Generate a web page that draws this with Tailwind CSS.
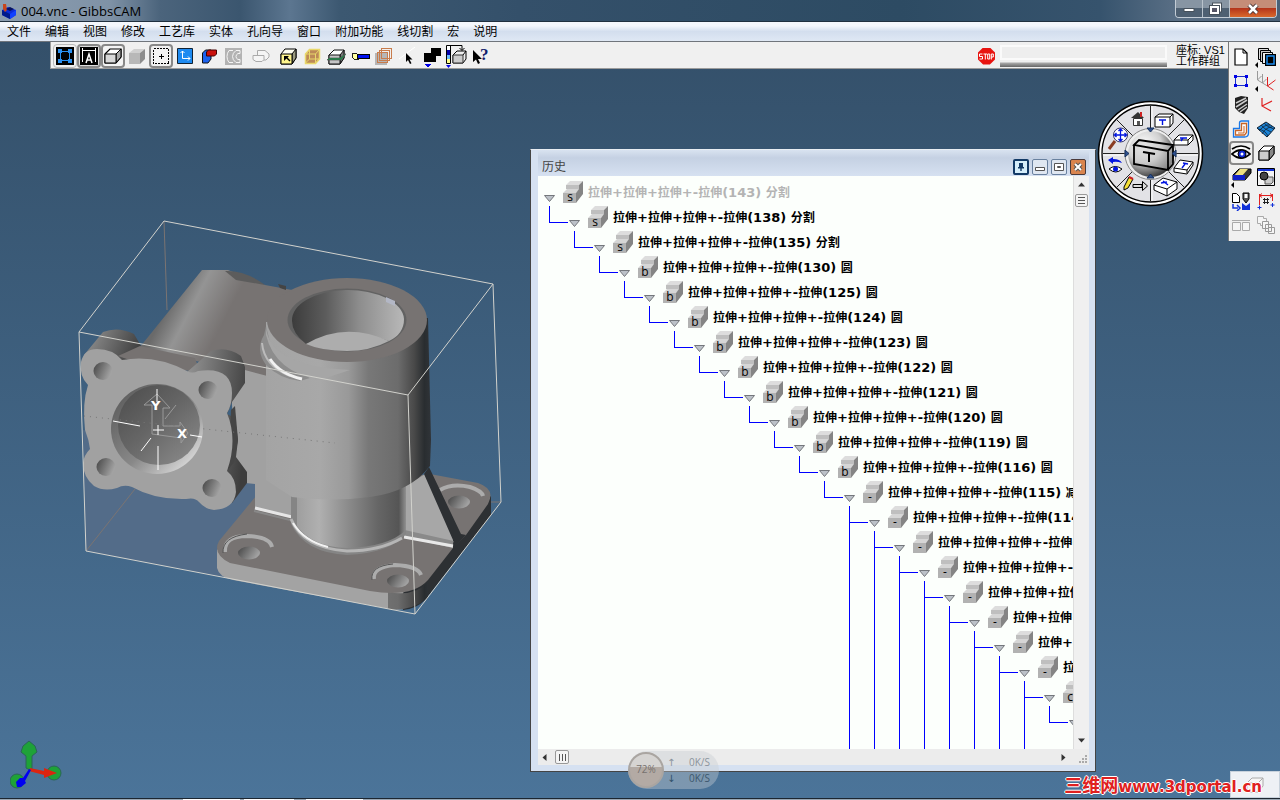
<!DOCTYPE html>
<html lang="zh-CN">
<head>
<meta charset="utf-8">
<title>004.vnc - GibbsCAM</title>
<script src="https://cdn.jsdelivr.net/npm/@tailwindcss/browser@4"></script>
</head>
<body class="flex h-screen flex-col overflow-hidden bg-[#34506a] font-['Open_Sans','Noto_Sans_CJK_SC',sans-serif] text-xs text-black">

<!-- Title bar -->
<header class="flex h-[22px] shrink-0 items-start justify-between border-b border-[#20303f] bg-[linear-gradient(90deg,#8b9db0_0,#7f92a6_110px,#4b647c_160px,#3b566f_240px,#5c7690_290px,#3c5871_340px,#34506a_520px,#2d4b63_900px,#36536d_1100px,#5b7086_1180px,#4a6077_100%)]">
  <div class="flex h-[21px] items-center gap-1 pl-px">
    <svg class="size-4" viewBox="0 0 16 16"><path d="M1 7l6-3 8 3v5l-6 4-8-4z" fill="#0a2ad8"/><path d="M1 7l8 4v5l-8-4z" fill="#001a8c"/><path d="M9 11l6-4v5l-6 4z" fill="#1040ff"/><path d="M2 1h3l1 6-2 2-2-3z" fill="#c8451c"/><path d="M5 6l4-2 4 2-4 2z" fill="#061260"/></svg>
    <h1 class="text-[13px] leading-5">004.vnc - GibbsCAM</h1>
  </div>
  <div class="mr-[3px] flex h-[18px] overflow-hidden rounded-b border border-t-0 border-[#c3ccd5]">
    <button aria-label="最小化" class="flex w-[27px] items-center justify-center border-r border-[#b9c3cc] bg-linear-to-b from-[#8795a3] from-45% to-[#4e6072] to-50%"><svg class="h-3 w-3" viewBox="0 0 12 12"><path d="M1 5.500h10v3H1z" fill="#fff" stroke="#46505a"/></svg></button>
    <button aria-label="还原" class="flex w-[27px] items-center justify-center border-r border-[#b9c3cc] bg-linear-to-b from-[#8795a3] from-45% to-[#4e6072] to-50%"><svg class="h-[14px] w-[14px]" viewBox="0 0 14 14"><path d="M5 2.500h6v6H5z" fill="none" stroke="#46505a" stroke-width="4"/><path d="M5 2.500h6v6H5z" fill="none" stroke="#fff" stroke-width="2"/><path d="M2 5h7v6H2z" fill="#556" stroke="#46505a" stroke-width="4"/><path d="M2 5h7v6H2z" fill="#556" stroke="#fff" stroke-width="2"/></svg></button>
    <button aria-label="关闭" class="flex w-[46px] items-center justify-center bg-linear-to-b from-[#c58d78] from-45% via-[#b5351b] via-50% to-[#d9682c]"><svg class="h-3 w-3" viewBox="0 0 12 12"><path d="M2 2l8 8M10 2l-8 8" stroke="#4a3535" stroke-width="4.500"/><path d="M2 2l8 8M10 2l-8 8" stroke="#fff" stroke-width="2.500"/></svg></button>
  </div>
</header>

<!-- Menu bar -->
<nav class="flex h-5 shrink-0 items-center gap-[14px] border-b border-[#70757c] bg-linear-to-b from-[#f4f7fc] from-20% via-[#d3deee] via-50% to-[#dfe8f4] pl-[7px] leading-4">
  <button>文件</button><button>编辑</button><button>视图</button><button>修改</button><button>工艺库</button><button>实体</button><button>孔向导</button><button>窗口</button><button>附加功能</button><button>线切割</button><button>宏</button><button>说明</button>
</nav>

<main class="relative flex-1 bg-linear-to-b from-[#34506a] to-[#4b7499]">

  <div class="flex items-start">
    <!-- Toolbar -->
    <div class="ml-[50px] flex h-[27px] flex-1 items-center border-b border-l border-[#9b9b9b] bg-[#f0f0f0] pt-[2px] pl-[2px]">
      <button aria-label="工作区" class="flex size-6 items-center justify-center rounded border border-[#bbb]"><svg class="size-[18px]" viewBox="0 0 18 18" shape-rendering="crispEdges"><path d="M0 0h18v18H0z"/><path d="M4.500 4.500h9v9h-9z" fill="none" stroke="#2a90f0"/><path d="M2 2h4v4H2zM12 2h4v4h-4zM2 12h4v4H2zM12 12h4v4h-4z" fill="#2a90f0"/></svg></button>
      <button aria-label="标注" class="flex size-6 items-center justify-center rounded border-2 border-[#888] bg-[#ddd]"><svg class="size-[18px] shrink-0" viewBox="0 0 18 18"><path d="M0 0h18v18H0z"/><path d="M2.500 15V3.500h13V15M2.500 1v4M15.500 1v4" fill="none" stroke="#fff"/><path d="M6 16l3-9 3 9M7 13h4" fill="none" stroke="#fff" stroke-width="1.500"/></svg></button>
      <button aria-label="实体" class="flex size-6 items-center justify-center rounded border-2 border-[#888] bg-[#f4f4f4]"><svg class="size-[18px] shrink-0" viewBox="0 0 18 18"><path d="M1 7l5-5h11v8l-5 6H1z" fill="#fff" stroke="#000" stroke-width="1.200"/><path d="M12 7l5-5v8l-5 6z" fill="#aaa" stroke="#000"/><path d="M1 7h11v9H1z" fill="#d8d8d8" stroke="#000"/></svg></button>
      <button aria-label="着色" class="flex size-6 items-center justify-center"><svg class="size-[18px]" viewBox="0 0 18 18"><path d="M1 6l5-4h11l-5 4z" fill="#d0d0d0"/><path d="M1 6h11v11H1z" fill="#b8b8b8"/><path d="M12 6l5-4v10l-5 5z" fill="#8d8d8d"/></svg></button>
      <button aria-label="选择" class="flex size-6 items-center justify-center rounded border-2 border-[#888]"><svg class="size-[18px] shrink-0" viewBox="0 0 18 18" shape-rendering="crispEdges"><path d="M1.500 1.500h15v15h-15z" fill="#f4f4f4" stroke="#000" stroke-dasharray="2 1"/><path d="M9.500 7v5M7 9.500h5" stroke="#000"/></svg></button>
      <button aria-label="坐标系" class="flex size-6 items-center justify-center"><svg class="size-[16px]" viewBox="0 0 16 16"><path d="M.5.500h15v15H.5z" fill="#1e8af0" stroke="#123"/><path d="M5.500 3v7.500H13M3.500 5l2-2 2 2M11 8.500l2 2-2 2" fill="none" stroke="#fff"/></svg></button>
      <button aria-label="切换" class="flex size-6 items-center justify-center"><svg class="size-[16px]" viewBox="0 0 16 16"><path d="M1.500 5l3-3H10v9l-3 4H1.500z" fill="#1c62ee" stroke="#111"/><path d="M5.500 4l2-2h8v4l-2 2H5.500z" fill="#c9100c" stroke="#400"/></svg></button>
      <button aria-label="轮廓" class="flex size-6 items-center justify-center"><svg class="size-[17px]" viewBox="0 0 17 17"><path d="M0 0h17v17H0z" fill="#b3b3b3"/><path d="M8 2.500H4Q2 5 2 8.500T4 14.500h4M15 2.500h-4Q7.500 5 7.500 8.500t3.500 6h4v-3h-2q-2-1-2-3t2-3h2z" fill="none" stroke="#f4f4f4"/></svg></button>
      <button aria-label="毛坯" class="ml-1 flex size-6 items-center justify-center"><svg class="h-[14px] w-[18px]" viewBox="0 0 18 14"><path d="M5.500 6V1.500H13l4 3.500v3l-3 3h-3" fill="#f5f5f5" stroke="#aaa"/><path d="M1 6.500h11v4l-2 2H4l-3-2z" fill="#f5f5f5" stroke="#aaa"/></svg></button>
      <button aria-label="选面" class="ml-[3px] flex size-6 items-center justify-center"><svg class="size-[17px]" viewBox="0 0 17 17"><path d="M1 6l4-5h11v9l-4 6H1z" fill="#fffef0" stroke="#000"/><path d="M12 6l4-5v9l-4 6z" fill="#9a9a80" stroke="#000"/><path d="M1 6h11v10H1z" fill="#fff58c" stroke="#000"/><path d="M4 8h5L7.500 9.500l3 3-1 1-3-3L4 13z"/></svg></button>
      <button aria-label="选边" class="flex size-6 items-center justify-center"><svg class="size-[17px]" viewBox="0 0 17 17"><path d="M1.500 6l4-4.500h10V11l-4 4.500h-10z" fill="#bd8a58" stroke="#e9d86a" stroke-width="1.500"/><path d="M1 6h10.500v9M11.500 6l4-4.500M5.500 2v9h10M5.500 11l-4 4" fill="none" stroke="#e9d86a"/></svg></button>
      <button aria-label="剖面" class="flex size-6 items-center justify-center"><svg class="size-[19px]" viewBox="0 0 19 19"><path d="M2 8l5-5h10v8l-4 6H2z" fill="#fff" stroke="#111"/><path d="M13 8l4-5v8l-4 6z" fill="#777" stroke="#111"/><path d="M2 8h11v9H2z" fill="#c5c5c5" stroke="#111"/><path d="M0 13l2-2h11l5-4h1l-5 6z" fill="#159045" stroke="#555" stroke-width=".7"/></svg></button>
      <button aria-label="刀具" class="flex size-6 items-center justify-center"><svg class="h-[9px] w-[19px]" viewBox="0 0 19 9" shape-rendering="crispEdges"><path d="M1 1h4l2 2v4H3L1 5z" fill="#ffffa0" stroke="#222"/><path d="M6.500 2.500h12v4h-12z" fill="#0010f0" stroke="#000"/></svg></button>
      <button aria-label="图层" class="flex size-6 items-center justify-center"><svg class="size-[18px]" viewBox="0 0 18 18" shape-rendering="crispEdges"><path d="M0 6h12v12H0z" fill="#b6b6b6"/><path d="M2.500 5.500h10v10h-10zM4.500 3.500h10v10h-10zM6.500 1.500h10v10h-10z" fill="none" stroke="#c87c4c"/></svg></button>
      <button aria-label="指针" class="flex size-6 items-center justify-center"><svg class="size-[18px]" viewBox="0 0 18 18"><path d="M0 12L16 0" stroke="#fff"/><path d="M7 6v9l2-2 2 4 1.500-.7-2-3.800h3z"/></svg></button>
      <button aria-label="形状" class="flex size-6 items-end justify-center"><svg class="h-[22px] w-[19px]" viewBox="0 0 19 22" shape-rendering="crispEdges"><path d="M1 7h12v9H1zM8 2h10v8h-5V7H8z"/><path d="M1 18h7l-3 4z" fill="#0000e8"/></svg></button>
      <button aria-label="定位" class="flex size-6 items-end justify-center"><svg class="h-[24px] w-[22px]" viewBox="0 0 22 24"><path d="M1.500 1.500h4v18h-4z" fill="#fff" stroke="#000"/><path d="M2 6h3v5H2z" fill="#00a"/><path d="M2 11h3v4H2z" fill="#6bf"/><path d="M2 15h3v4H2z" fill="#ff8"/><path d="M5 1.500h12V6M14.500 4l2.500 2.500L19.500 4" fill="none" stroke="#000"/><path d="M8 11l4-4h9v8l-3 4H8z" fill="#eee" stroke="#000"/><path d="M8 11h10v8H8z" fill="#ccc" stroke="#333"/><path d="M18 11l3-4" stroke="#000"/><path d="M1 21h5l-2.500 3z" fill="#0000e8"/></svg></button>
      <button aria-label="帮助" class="flex size-6 items-center justify-center"><svg class="h-[20px] w-[20px] shrink-0 overflow-visible" viewBox="0 0 20 20"><path d="M3 4v12l3-2.500 2 4.500 2-1-2-4h4z"/><text x="10" y="14" class="font-['Liberation_Serif'] text-[17px] font-bold" fill="#10206c">?</text></svg></button>

      <div class="ml-auto flex items-center">
        <button aria-label="停止" class="size-[17px] bg-[#e81410] [clip-path:polygon(30%_0,70%_0,100%_30%,100%_70%,70%_100%,30%_100%,0_70%,0_30%)]"><svg class="block size-[17px]" viewBox="0 0 17 17"><path d="M4.500 6h-3v2.500h3V11h-3M5.500 6h3.500M7.300 6v5.500M9.700 6h2v5h-2zM13.300 11.500V6h2v3h-2" fill="none" stroke="#fff"/></svg></button>
        <div class="ml-[5px] flex w-[167px] flex-col gap-[2px]" role="progressbar" aria-label="进度">
          <div class="h-[15px] border-2 border-[#fafafa] bg-[#eee]"></div>
          <div class="h-[5px] border-t border-[#ccc] bg-linear-to-b from-[#aaa] to-[#666]"></div>
        </div>
        <p class="ml-[9px] w-[52px] pr-px font-['Liberation_Sans','Noto_Sans_CJK_SC',sans-serif] text-[11px] leading-[11px] whitespace-nowrap">座标: VS1<br>工作群组</p>
      </div>
    </div>

    <!-- Tool palette -->
    <div class="grid w-[52px] shrink-0 grid-cols-2 border-l border-[#777] bg-[#f0f0f0] pt-[3px] pr-[2px] pb-1">
      <button aria-label="新建" class="flex h-6 items-center justify-center"><svg class="size-5" viewBox="0 0 20 20"><path d="M4 2h8l4 4v12H4z" fill="#fff" stroke="#000" stroke-width="1.200"/><path d="M12 2v4h4" fill="none" stroke="#000"/></svg></button>
      <button aria-label="图层组" class="flex h-6 items-center justify-center"><svg class="size-[22px]" viewBox="0 0 22 22"><path d="M3.500 2.500h10v11h-10z" fill="#ddd" stroke="#000"/><path d="M5.500 4.500h10v11h-10z" fill="#ccc" stroke="#000"/><path d="M7.500 6.500h10v11h-10z" fill="#eee" stroke="#000"/><path d="M10 8h11v12H10z"/><path d="M12 10h7v8h-7z" fill="none" stroke="#1a8cf0" stroke-width="1.500"/><path d="M3 16v6l-3-3z"/></svg></button>
      <button aria-label="几何" class="flex h-6 items-center justify-center"><svg class="size-5" viewBox="0 0 20 20" shape-rendering="crispEdges"><path d="M4.500 5.500h11v9h-11z" fill="none" stroke="#1a30c8"/><path d="M3 4h3v3H3zM14 4h3v3h-3zM3 13h3v3H3zM14 13h3v3h-3z" fill="#0000e8"/></svg></button>
      <button aria-label="坐标系组" class="flex h-6 items-center justify-center"><svg class="size-[22px]" viewBox="0 0 22 22"><path d="M2.500 1v9l5 3M2.500 10l4-4M7.500 4v9l5 3M7.500 13l4-4" fill="none" stroke="#999"/><path d="M12.500 7v9l6 4M12.500 16l8-6" fill="none" stroke="#e02020"/><path d="M3 16v6l-3-3z"/></svg></button>
      <button aria-label="铣刀" class="flex h-6 items-center justify-center"><svg class="size-5" viewBox="0 0 20 20"><path d="M4 3l6-2 7 1v11l-4 6-5-2-4-4z" fill="#222"/><path d="M5 8l10-5M5 12l11-7M7 15l9-6M9 17l7-5" stroke="#ccc" stroke-width="1.500"/></svg></button>
      <button aria-label="坐标系" class="flex h-6 items-center justify-center"><svg class="size-5" viewBox="0 0 20 20"><path d="M6 3v8l9 5M6 11l10-5" fill="none" stroke="#e02020" stroke-width="1.200"/></svg></button>
      <button aria-label="加工" class="flex h-6 items-center justify-center"><svg class="size-5" viewBox="0 0 20 20"><path d="M2.500 9.500h6V4q0-2 2-2h7v12q0 4-4 4h-11z" fill="none" stroke="#1a78e8" stroke-width="1.300"/><path d="M4.500 11.500h6v-7h5v9l-2 2.500h-9z" fill="#fff" stroke="#c86428" stroke-width="1.300"/><path d="M7 14h6V7" fill="none" stroke="#c86428"/></svg></button>
      <button aria-label="曲面" class="flex h-6 items-center justify-center"><svg class="size-5" viewBox="0 0 20 20"><path d="M1 9l9-6 9 6-8 9z" fill="#1a84d8" stroke="#123"/><path d="M3 12q6-7 11-6M6 15q4-7 10-7M5 6q3 4 10 7M2 10q7 1 10 7M8 4q3 4 10 6" fill="none" stroke="#123" stroke-width=".8"/></svg></button>
      <button aria-label="视图" class="flex h-6 items-center justify-center rounded border-2 border-[#888]"><svg class="size-5 shrink-0" viewBox="0 0 20 20"><path d="M1 6q9-6 18 0M1 11q9-8 18 0-9 8-18 0z" fill="#fff" stroke="#000" stroke-width="1.700"/><circle cx="11" cy="11" r="4" fill="#1028d8" stroke="#000"/><circle cx="11" cy="11" r="1.500" fill="#fff"/></svg></button>
      <button aria-label="实体模型" class="flex h-6 items-center justify-center"><svg class="size-5" viewBox="0 0 20 20"><path d="M3 8l5-5h10v8l-5 6H3z" fill="#fff" stroke="#000"/><path d="M13 8l5-5v8l-5 6z" fill="#888" stroke="#000"/><path d="M3 8h10v9H3z" fill="#ccc" stroke="#000"/></svg></button>
      <button aria-label="切削" class="flex h-6 items-center justify-center"><svg class="size-[22px]" viewBox="0 0 22 22"><path d="M3 9l6-6h12v4l-6 7H3z" fill="#333" stroke="#000"/><path d="M10 3h8l-6 7H4z" fill="#eee080"/><path d="M3 9h12v5H3z" fill="#1020c8"/><path d="M4 16v6l-3-3z"/></svg></button>
      <button aria-label="渲染" class="flex h-6 items-center justify-center"><svg class="size-5" viewBox="0 0 20 20"><path d="M1.500 1.500h17v17h-17z" fill="#f4f4f4" stroke="#000"/><path d="M2 2h16v2H2z" fill="#1030d8"/><path d="M9 12l2-2h6v5l-2 2H9z" fill="#ccc" stroke="#555"/><circle cx="8" cy="9" r="4" fill="#444" stroke="#000"/></svg></button>
      <button aria-label="后处理" class="flex h-6 items-center justify-center"><svg class="size-5" viewBox="0 0 20 20"><path d="M1.500 2.500h4l3 3v6h-7z" fill="#fff" stroke="#000"/><path d="M2 13v4h5M6 14l3 3-3 3" fill="none" stroke="#1030d8" stroke-width="1.500"/><path d="M12 2h6v6l-3 4-3-4z" fill="#555" stroke="#000"/><path d="M13.500 3h3v4h-3z" fill="#fff"/><path d="M11 12l4 3 4-3v7h-8z" fill="#1030d8"/></svg></button>
      <button aria-label="尺寸" class="flex h-6 items-center justify-center"><svg class="size-5" viewBox="0 0 20 20"><path d="M3.500 3v11M16.500 3v7M3 4.500h14M6 2.500l-2.500 2 2.500 2M14 2.500l2.500 2-2.500 2" fill="none" stroke="#e02020"/><path d="M8.500 7v6M11.500 7v6M7 8.500h6M7 11.500h6" stroke="#222"/><path d="M3.500 14.500v4M1.500 16.500h4M16.500 12v4M14.500 14h4" stroke="#1030d8"/></svg></button>
      <button aria-label="平铺" disabled class="flex h-6 items-center justify-center"><svg class="size-5" viewBox="0 0 20 20"><path d="M1 5.500h18M1.500 7.500h8v8h-8zM11.500 7.500h7v8h-7z" fill="#f5f5f5" stroke="#aaa"/></svg></button>
      <button aria-label="层叠" disabled class="flex h-6 items-center justify-center"><svg class="size-5" viewBox="0 0 20 20"><path d="M1.500 1.500h6v2h3v7h-6v-2h-3z" fill="#f5f5f5" stroke="#aaa"/><path d="M6.500 6.500h6v7h-6zM9.500 9.500h6v7h-6zM12.500 12.500h6v6h-6z" fill="#f5f5f5" stroke="#999"/></svg></button>
    </div>
  </div>

  <!-- Solid model -->
  <svg class="absolute top-[168px] left-[70px] h-[410px] w-[440px]" viewBox="70 210 440 410">
    <defs>
      <linearGradient id="cyl" gradientUnits="userSpaceOnUse" x1="266" x2="431"><stop offset="0" stop-color="#a4a4a4"/><stop offset=".33" stop-color="#a8a8a8"/><stop offset=".5" stop-color="#999"/><stop offset=".62" stop-color="#787878"/><stop offset=".8" stop-color="#6c6c6c"/><stop offset=".9" stop-color="#484848"/><stop offset=".96" stop-color="#292d30"/><stop offset="1" stop-color="#303438"/></linearGradient>
      <linearGradient id="neck" gradientUnits="userSpaceOnUse" x1="290" x2="407"><stop offset="0" stop-color="#999"/><stop offset=".25" stop-color="#b0b0b0"/><stop offset=".45" stop-color="#929292"/><stop offset=".75" stop-color="#666"/><stop offset=".93" stop-color="#555"/><stop offset="1" stop-color="#999"/></linearGradient>
      <linearGradient id="bore"><stop offset="0" stop-color="#3c3c3c"/><stop offset=".3" stop-color="#5c5c5c"/><stop offset=".6" stop-color="#8d8d8d"/><stop offset="1" stop-color="#b8b8b8"/></linearGradient>
      <linearGradient id="hole" x1="0" y1="0" x2="1" y2=".4"><stop offset="0" stop-color="#444"/><stop offset="1" stop-color="#a2a2a2"/></linearGradient>
      <linearGradient id="tube" gradientUnits="userSpaceOnUse" x1="166" y1="310" x2="216" y2="336"><stop offset="0" stop-color="#6a6a6a"/><stop offset=".38" stop-color="#949494"/><stop offset="1" stop-color="#777372"/></linearGradient>
      <linearGradient id="ear" x1="0" y1=".2" x2="1" y2=".5"><stop offset="0" stop-color="#939393"/><stop offset="1" stop-color="#3d3d3d"/></linearGradient>
      <linearGradient id="chamfer" x1="0" y1="0" x2="1" y2="1"><stop offset="0" stop-color="#555"/><stop offset=".55" stop-color="#888"/><stop offset=".9" stop-color="#ddd"/></linearGradient>
      <linearGradient id="port" x1="0" y1="0" x2=".9" y2="1"><stop offset="0" stop-color="#4b4b4b"/><stop offset=".5" stop-color="#666"/><stop offset="1" stop-color="#8b8b8b"/></linearGradient>
    </defs>
    <path d="M83 430L86 551 230 578 258 540V460z" fill="#536c89"/>
    <path d="M164 221L167 310M86 551L135 489M490 502h11" fill="none" stroke="#7b7472"/>
    <!-- base plate -->
    <path d="M217 550V568Q219 577 233 580L390 609Q408 612 422 601L491 515V498L440 480 250 520z" fill="#a3a3a3"/>
    <path d="M403 593V610Q416 609 425 600L491 515V496L440 540z" fill="#2d3033"/>
    <path d="M388 592Q415 597 428 582V598Q410 612 388 609z" fill="url(#cyl)"/>
    <path d="M256 496L219 541Q212 554 230 563L370 591Q412 598 428 580L453 548 466 535 488 504Q496 489 478 483L430 474 300 490z" fill="#777372"/>
    <g fill="none" stroke="#acacac" stroke-width="4"><path d="M225 552Q224 536 247 536 270 537 272 547"/><path d="M374 579Q372 567 395 565 418 566 421 575"/><path d="M440 490Q452 483 470 487 482 491 483 496"/></g>
    <g fill="none" stroke="#555"><path d="M223 553Q222 537 247 534"/><path d="M372 580Q370 566 393 564"/></g>
    <ellipse cx="249" cy="553" rx="11" ry="6.500" fill="url(#hole)"/><ellipse cx="398" cy="581" rx="11" ry="6.500" fill="url(#hole)"/><ellipse cx="459" cy="502" rx="11" ry="6.500" fill="url(#hole)"/>
    <!-- rib -->
    <path d="M404 487L425 474 453 538V548L404 537z" fill="#a7a7a7"/>
    <path d="M424 474L429 467 461 534 466 535 453 549V540z" fill="#2d3033"/>
    <path d="M404 533L453 544" stroke="#8a8a8a" stroke-width="6"/><path d="M404 537L453 546" stroke="#e8e8e8" stroke-width="3"/>
    <!-- body and neck -->
    <path d="M140 347L202 270 228 270 265 285 292 290 330 330 300 390 240 372z" fill="url(#tube)"/>
    <path d="M225 271Q245 270 265 285L236 280z" fill="#5c5c5c"/>
    <path d="M278 284l8 2v4l-6-2z" fill="#444"/>
    <path d="M230 366L275 378H330V517L292 517 255 508V484L236 482z" fill="#a1a1a1"/>
    <path d="M255 508L292 517" stroke="#e6e6e6" stroke-width="3"/><path d="M254 511L290 520" stroke="#888" stroke-width="2"/>
    <path d="M291 492V524Q305 553 347 555 390 553 406 534V480z" fill="#858585"/>
    <path d="M297 492V526Q312 547 347 548 388 547 406 530V480z" fill="url(#neck)"/>
    <path d="M291 519Q303 548 347 551 380 551 402 538" fill="none" stroke="#b6b6b6" stroke-width="3"/>
    <path d="M293 523Q304 541 328 547" fill="none" stroke="#f2f2f2" stroke-width="2"/>
    <path d="M266 322V480L292 497Q330 502 370 497 410 492 430 466L431 440 428 318z" fill="url(#cyl)"/>
    <path d="M264 335Q255 350 266 365 280 379 300 381L310 378 272 350 266 326z" fill="#8d8d8d"/>
    <path d="M266 326Q268 366 350 370L320 380Q275 372 266 335z" fill="#a6a6a6"/>
    <path d="M262 343Q264 366 290 376" fill="none" stroke="#bbb" stroke-width="2"/><path d="M270 359Q280 374 302 379" fill="none" stroke="#f2f2f2" stroke-width="3"/>
    <ellipse cx="347" cy="320" rx="80" ry="42" fill="#777372"/>
    <ellipse cx="347" cy="320" rx="59.500" ry="31.500" fill="#626262"/>
    <path d="M292 321A56 30 0 0 1 404 319Q404 334 389 341 347 325 306 344 292 333 292 321z" fill="url(#bore)"/>
    <path d="M306 344Q345 321 389 341 370 351 347 351 322 351 306 344z" fill="#adadad"/>
    <path d="M386 297l9 4v5l-9-4z" fill="#b3b7c5"/>
    <!-- flange -->
    <path d="M84 355L103 332Q118 326 134 334L141 346V353L120 366z" fill="url(#ear)"/>
    <path d="M118 356L140 346 195 358 200 372 150 367z" fill="#767271"/>
    <path d="M186 373L211 351Q227 346 241 356L245 367V383L232 402 227 414 235 418 238 440 236 457 247 472V483L232 503 215 430z" fill="url(#ear)"/>
    <path d="M231 410L235 406 238 440 234 462 228 470z" fill="#454545"/>
    <path d="M81 362Q84 349 97 349 113 349 122 360Q155 354 187 371Q192 374 198 371Q232 366 232 393Q232 405 227 413Q238 440 227 471Q236 478 236 492Q234 509 214 510Q205 509 199 502Q195 497 186 499Q155 500 132 487Q124 484 117 488Q104 492 94 486Q83 477 83 463Q84 455 90 449Q89 440 85 430Q82 403 88 385Q79 376 81 362z" fill="#a1a1a1"/>
    <g fill="url(#hole)"><ellipse cx="103" cy="371" rx="9.500" ry="9"/><ellipse cx="208" cy="390" rx="9.500" ry="9"/><ellipse cx="106" cy="467" rx="9.500" ry="9"/><ellipse cx="212" cy="488" rx="9.500" ry="9"/></g>
    <ellipse cx="157" cy="429" rx="46" ry="45" fill="url(#chamfer)"/>
    <ellipse cx="159" cy="425" rx="41" ry="40" fill="url(#port)"/>
    <g fill="none" stroke="#999"><path d="M144 405L157 394 170 408H163V426H180V422L188 433 181 443V438L152 434V405zM176 405L165 419"/><path d="M84 416L335 443" stroke="#777" stroke-dasharray="1 5"/></g>
    <path d="M157 389V402M113 421L140 426M141 451L151 438M158 446V470M190 435L202 437M153 430h11M158 425v10" stroke="#fff"/>
    <text x="151" y="410" class="font-['DejaVu_Sans'] text-[13px] font-bold" fill="#fff">Y</text>
    <text x="177" y="438" class="font-['DejaVu_Sans'] text-[13px] font-bold" fill="#fff">X</text>
    <path d="M164 221L493 284 408 395 79 332zM79 332L86 551 415 614 408 395M415 614L501 502 493 284" fill="none" stroke="#d2d2cd"/>
  </svg>

  <!-- Orientation triad -->
  <svg class="absolute bottom-2 left-[10px] h-[52px] w-[54px]" viewBox="0 0 54 52" stroke="#2b6656" stroke-width="1">
    <path d="M16 30V18l-5-4 2-6 6-5 6 5 2 6-5 4v15z" fill="#1ea238"/><circle cx="44" cy="35" r="7" fill="#1ea238"/><circle cx="7" cy="43" r="7" fill="#1ea238"/>
    <path d="M20 30l14 3v-3l13 5-13 5v-3l-15-4z" fill="#dc2410" stroke="none"/><path d="M19 31l2 1-6 11 1 2-5 4H7l-1-5 4-4h3z" fill="#0000f0" stroke="none"/>
  </svg>

  <!-- History window -->
  <section aria-label="历史" class="absolute top-[107px] left-[530px] flex h-[623px] w-[566px] flex-col border border-t-[#e8edf2] border-r-[#444] border-b-[#444] border-l-[#444] bg-[#d6e1f1] pr-[6px] pb-[6px] pl-[7px]">
    <div class="flex h-[26px] shrink-0 items-end justify-between bg-linear-to-b from-[#d9e3f0] via-[#c5d1e3] via-30% to-[#d6e1f1] pr-[2px] pb-px pl-1">
      <h2 class="text-xs leading-4 text-[#444]">历史</h2>
      <div class="flex gap-[3px]">
        <button aria-label="固定" class="flex size-4 items-center justify-center rounded-xs border-2 border-[#123a66] bg-[#d5eefa]"><svg class="size-3 shrink-0" viewBox="0 0 12 12"><path d="M4 2h4v4h1v1.500H6.700V10H5.300V7.500H3V6h1z" fill="#123a66"/></svg></button>
        <button aria-label="最小化" class="flex size-4 items-center justify-center rounded-xs border border-[#69819f] bg-[#dfe7f1]"><svg class="size-3" viewBox="0 0 12 12"><path d="M1.500 6.500h9v3h-9z" fill="#fff" stroke="#555"/></svg></button>
        <button aria-label="最大化" class="flex size-4 items-center justify-center rounded-xs border border-[#69819f] bg-[#dfe7f1]"><svg class="size-3" viewBox="0 0 12 12"><path d="M1.500 2.500h9v7h-9z" fill="#fff" stroke="#555"/><path d="M4.500 5.500h3v1h-3z" fill="none" stroke="#555"/></svg></button>
        <button aria-label="关闭" class="mr-px flex size-4 items-center justify-center rounded-xs border border-[#4a3a3a] bg-[#d9844e]"><svg class="size-3" viewBox="0 0 12 12"><path d="M3 3l6 6M9 3l-6 6" stroke="#555" stroke-width="4"/><path d="M3 3l6 6M9 3l-6 6" stroke="#fff" stroke-width="2"/></svg></button>
      </div>
    </div>
    <div class="flex min-h-0 flex-1">
      <ul id="tree" class="min-w-0 flex-1 overflow-hidden bg-[#fcfffc] pt-[5px]"></ul>
      <div class="flex w-4 flex-col items-center justify-between border-l border-[#ddd] bg-[#f0f0f0] py-[6px]">
        <div class="flex flex-col items-center gap-[7px]">
          <button aria-label="向上滚动"><svg class="block h-[5px] w-[7px]" viewBox="0 0 7 5"><path d="M0 4.500l3.500-4 3.500 4z" fill="#333"/></svg></button>
          <button aria-label="垂直滑块" class="flex h-[13px] w-[13px] flex-col items-center justify-center gap-px rounded-xs border border-[#999] bg-[#f4f4f4]"><span class="h-px w-[7px] bg-[#555]"></span><span class="mt-px h-px w-[7px] bg-[#555]"></span><span class="mt-px h-px w-[7px] bg-[#555]"></span></button>
        </div>
        <button aria-label="向下滚动"><svg class="block h-[5px] w-[7px]" viewBox="0 0 7 5"><path d="M0 .5l3.500 4 3.500-4z" fill="#333"/></svg></button>
      </div>
    </div>
    <div class="flex h-4 shrink-0 items-center justify-between bg-[#ececec] pl-1">
      <div class="flex items-center gap-2">
        <button aria-label="向左滚动"><svg class="block h-[7px] w-[5px]" viewBox="0 0 5 7"><path d="M4.500 0L.5 3.500l4 3.500z" fill="#333"/></svg></button>
        <button aria-label="水平滑块" class="flex h-[14px] w-[14px] items-center justify-center gap-[2px] rounded-xs border border-[#999] bg-[#f4f4f4]"><span class="h-[7px] w-px bg-[#555]"></span><span class="h-[7px] w-px bg-[#555]"></span><span class="h-[7px] w-px bg-[#555]"></span></button>
      </div>
      <div class="flex items-center gap-3 pr-px">
        <button aria-label="向右滚动"><svg class="block h-[7px] w-[5px]" viewBox="0 0 5 7"><path d="M.5 0l4 3.500-4 3.500z" fill="#333"/></svg></button>
        <svg class="mt-1 size-[10px]" viewBox="0 0 10 10" fill="#aaa"><path d="M7 1h2v2H7zM4 4h2v2H4zM7 4h2v2H7zM1 7h2v2H1zM4 7h2v2H4zM7 7h2v2H7z"/></svg>
      </div>
    </div>
  </section>

  <!-- View wheel -->
  <svg class="absolute top-[53px] right-[75px] h-[115px] w-[110px]" viewBox="0 0 110 115">
    <defs><radialGradient id="ball" cx=".35" cy=".3" r=".75"><stop offset="0" stop-color="#fff"/><stop offset=".5" stop-color="#d0d0d0"/><stop offset="1" stop-color="#333"/></radialGradient></defs>
    <circle cx="55.500" cy="58.500" r="52" fill="#fff" stroke="#000" stroke-width="1.500"/>
    <circle cx="55.500" cy="58.500" r="48.500" fill="#e2e2e6" stroke="#000" stroke-width="1.300"/>
    <path d="M55.500 11v95M8 58.500h95M22 25l67 67M89 25L22 92" stroke="#222"/><path d="M57 11v95M8 60h95" stroke="#fff"/>
    <circle cx="55.500" cy="59" r="25.500" fill="#eee" stroke="#888"/><circle cx="56" cy="59" r="23" fill="url(#ball)"/>
    <path d="M39 50l5-5 34 5v19l-5 6-34-6z" fill="#ccc" fill-opacity=".5"/><path d="M39 50l5-5 34 5-5 6zM39 50v19l34 6V56M73 75l5-6V50" fill="none" stroke="#000" stroke-width="1.800"/><path d="M48 57l12 2M54 58v9" stroke="#000" stroke-width="2"/>
    <path d="M52 33h7l-3.500 4zM52 83h7l-3.500-4zM30 55v7l4-3.500zM81 55v7l-4-3.500z" fill="#2f5190" stroke="#16305c"/>
    <path d="M36 23l7-6 6 6z" fill="#333"/><path d="M38.500 23.500h9v7h-9z" fill="#fff" stroke="#333"/><path d="M45 17h2v5h-2z" fill="#c22"/><path d="M42 26h3v4h-3z" fill="#555"/>
    <g fill="#fff" stroke="#000"><path d="M60 22l4-3h14v9l-3 4H60zM60 22h15v10M75 22l3-3"/><path d="M79 45l5-5h14v5l-5 5H79zM79 45h14v5M93 45l5-5"/><path d="M79 73l6-8 13 2v3l-6 9-13-2zM79 73l13 2v3M92 75l6-8"/><path d="M59 90l9-7 14 4v7l-10 7-13-6zM59 90l13 4v7M72 94l10-7"/></g>
    <path d="M64 25h7M67.500 25v5M85 43h7M88 43l-2 3M88 68l5 1M90 69l-3 4M66 88l6-1M68 86l5 4" stroke="#0014e0" stroke-width="1.400"/>
    <circle cx="25.500" cy="40" r="7" fill="#fff" stroke="#336"/><path d="M25.500 34v12M19.500 40h12M23.500 36l2-2 2 2M23.500 44l2 2 2-2M21.500 38l-2 2 2 2M29.500 38l2 2-2 2" fill="none" stroke="#0014e0" stroke-width="1.300"/><path d="M20 46l-6 8" stroke="#8a3c22" stroke-width="3"/>
    <path d="M13 65l5-3v2q7 0 9 4-5-2-9-1v2z" fill="#0014e0"/><path d="M14 74q6-5 13 0-6 6-13 0z" fill="#fff" stroke="#000"/><circle cx="20.500" cy="74" r="2.500" fill="#0014e0"/>
    <path d="M29 92l5-10 4 2-5 9-4 2z" fill="#f4df38" stroke="#000"/><path d="M34 82l4 2" stroke="#c22" stroke-width="2"/><path d="M38 89.500h9v3h-9zM47.500 86.500l5 4.500-5 4.500z" fill="#ddd" stroke="#000"/>
  </svg>

  <!-- Corner badge and site mark -->
  <div class="absolute right-0 bottom-0 flex h-[27px] w-[50px] items-center justify-center border border-[#c8d2dc] bg-[#eef1f5]"><svg class="size-5" viewBox="0 0 20 20"><path d="M2 8l5-5h11v8l-5 6H2zM2 8h11v9M13 8l5-5" fill="#f5f5f5" stroke="#aaa"/></svg></div>
  <a href="#" class="absolute right-[18px] bottom-px font-['DejaVu_Sans','Noto_Sans_CJK_SC',sans-serif] text-[15px] leading-5 font-bold whitespace-nowrap text-[#e02020] [text-shadow:1px_0_#fff,-1px_0_#fff,0_1px_#fff,0_-1px_#fff]"><span class="text-lg leading-5">三维网</span>www.3dportal.cn</a>

  <!-- Network speed meter -->
  <div class="absolute bottom-[9px] left-[628px] flex h-[38px] w-[91px] items-center rounded-full bg-[#c9cdd2]/40">
    <div class="flex size-9 items-center justify-center rounded-full border-2 border-[#aaa5a1] bg-linear-to-b from-[#d6d4d2] from-40% to-[#b3aaa4] to-40% text-[10px] text-[#77726f]">72%</div>
    <div class="ml-[3px] grid grid-cols-[22px_auto] font-['Open_Sans','DejaVu_Sans',sans-serif] text-[10px] leading-4"><span class="text-[#8a939c]">↑</span><span class="text-[#8a939c]">0K/S</span><span class="text-[#2f5068]">↓</span><span class="text-[#3d586d]">0K/S</span></div>
  </div>
</main>

<footer class="flex h-[2px] shrink-0 border-t border-[#1c2630] bg-[#9aa7b3]"><span class="ml-[183px] w-[57px] bg-white"></span><span class="ml-1 w-[50px] bg-white"></span><span class="ml-3 w-[57px] bg-white"></span></footer>

<script>
  const op = n => '拉伸+拉伸+拉伸+-拉伸(' + n + ') ';
  const rows = [
    ['s', 143, '分割'], ['s', 138, '分割'], ['s', 135, '分割'], ['b', 130, '圆'], ['b', 125, '圆'], ['b', 124, '圆'],
    ['b', 123, '圆'], ['b', 122, '圆'], ['b', 121, '圆'], ['b', 120, '圆'], ['b', 119, '圆'], ['b', 116, '圆'], ['-', 115, '减'],
    ['-', 114, '减'], ['-', 113, '减'], ['-', 112, '减'], ['-', 111, '减'], ['-', 110, '减'], ['-', 109, '减'], ['-', 108, '减'],
    ['c', 107, '圆'], ['c', 106, '圆']
  ];
  const mixed = s => s.replace(/[\u4e00-\u9fff]+/g, '<span class="text-xs">$&</span>');
  document.getElementById('tree').innerHTML = rows.map(([kind, n, tail], d) => `
    <li class="relative flex h-[25px] items-start whitespace-nowrap" style="padding-left:${d ? 25 * d - 14 : 6}px">
      ${d ? '<span class="mr-px h-[17px] w-[19px] shrink-0 border-b border-l border-[#0000ff]"></span>' : ''}
      ${d > 12 && d < 21 ? `<span class="absolute top-0 h-screen border-l border-[#0000ff]" style="left:${25 * d - 14}px"></span>` : ''}
      <button aria-label="展开" class="mt-[14px] shrink-0"><svg class="block h-[7px] w-[11px]" viewBox="0 0 11 7"><path d="M.5.500h10l-5 6z" fill="#bcc1c8" stroke="#74777c"/></svg></button>
      <svg class="ml-2 h-[22px] w-5 shrink-0 overflow-visible" viewBox="0 0 20 22"><path d="M3 4l4-4h13l-4 4z" fill="#ddd"/><path d="M3 4h13v4H3z" fill="#bfbfbf"/><path d="M0 12l4-4h13l-4 4z" fill="#d6d6d6"/><path d="M0 12h13v10H0z" fill="#b2b2b2"/><path d="M13 12l3-4V4l4-4v13l-7 9z" fill="#858585"/><text x="7" y="20" text-anchor="middle" class="font-['Open_Sans'] text-xs">${kind}</text></svg>
      ${d < 20 ? `<span class="ml-[5px] font-['DejaVu_Sans','Noto_Sans_CJK_SC',sans-serif] text-[13px] leading-[23px] font-bold ${d ? 'text-black' : 'text-[#b4b4b4]'}">${mixed(op(n) + tail)}</span>` : ''}
    </li>`).join('');
</script>
</body>
</html>
